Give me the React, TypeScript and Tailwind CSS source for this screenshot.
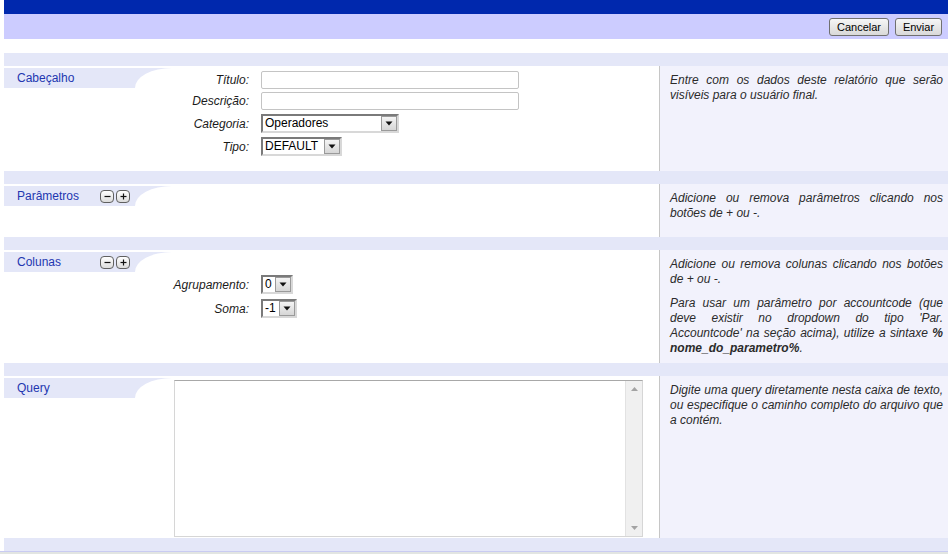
import type { ReactNode } from "react";

const band = "h-[13px] bg-[#e4e7f8]";

function Tab({ label, tools }: { label: string; tools?: boolean }) {
  return (
    <div className="mt-[2px] flex h-[20px]">
      <div className="flex flex-1 items-center bg-[#e4e7f8] pl-[13px] text-[12px] text-[#2236b0]">
        <span className="w-[83px]">{label}</span>
        {tools && (
          <div className="flex gap-[2px]">
            <MiniBtn kind="minus" />
            <MiniBtn kind="plus" />
          </div>
        )}
      </div>
      <svg width="37" height="20" viewBox="0 0 37 20" className="block">
        <path d="M0 0 H37 A37 20 0 0 0 0 20 Z" fill="#e4e7f8" />
      </svg>
    </div>
  );
}

function MiniBtn({ kind }: { kind: "minus" | "plus" }) {
  return (
    <div className="flex h-[13px] w-[14px] items-center justify-center rounded-[4px] border border-[#606060] bg-gradient-to-b from-white to-[#dcdcdc]">
      <svg width="7" height="7" viewBox="0 0 7 7">
        <path d="M0.5 3.5 H6.5" stroke="#111" strokeWidth="1.2" />
        {kind === "plus" && <path d="M3.5 0.5 V6.5" stroke="#111" strokeWidth="1.2" />}
      </svg>
    </div>
  );
}

function Select({ value, w }: { value: string; w: string }) {
  return (
    <div
      className={`flex h-[19px] items-stretch border-2 border-t-[#7a7a7a] border-l-[#7a7a7a] border-r-[#d8d8d8] border-b-[#d8d8d8] bg-white ${w}`}
    >
      <span className="flex-1 overflow-hidden whitespace-nowrap pl-[2px] text-[12px] leading-[15px] text-black">
        {value}
      </span>
      <span className="flex w-[16px] items-center justify-center border border-[#9a9a9a] bg-gradient-to-b from-[#f4f4f4] to-[#d6d6d6]">
        <svg width="8" height="5" viewBox="0 0 8 5">
          <path d="M0.5 0.5 H7.5 L4 4.5 Z" fill="#111" />
        </svg>
      </span>
    </div>
  );
}

function Input() {
  return (
    <div className="h-[18px] w-[258px] rounded-[2px] border border-[#c4c4c4] bg-white" />
  );
}

function Row({ label, children, className = "" }: { label: string; children: ReactNode; className?: string }) {
  return (
    <div className={`flex items-center ${className}`}>
      <span className="w-[77px] text-right text-[12px] italic text-[#1a1a1a]">{label}</span>
      <div className="ml-[12px]">{children}</div>
    </div>
  );
}

function Section({
  h,
  label,
  tools,
  middle,
  help,
}: {
  h: string;
  label: string;
  tools?: boolean;
  middle?: ReactNode;
  help: ReactNode;
}) {
  return (
    <>
      <div className={band} />
      <div className={`flex ${h}`}>
        <div className="w-[168px] shrink-0">
          <Tab label={label} tools={tools} />
        </div>
        <div className="w-[487px] shrink-0">{middle}</div>
        <div className="flex-1 border-l border-[#c6c6c6] bg-[#f2f2fc] pl-[10px] pr-[5px] pt-[7px] text-justify text-[12px] italic leading-[15px] text-[#2b2b2b]">
          {help}
        </div>
      </div>
    </>
  );
}

export default function App() {
  return (
    <div className="h-[554px] w-[948px] overflow-hidden bg-white font-['Liberation_Sans',Arial,sans-serif]">
      <div className="ml-[4px]">
        <div className="h-[14px] bg-[#0028ad]" />
        <div className="flex h-[25px] items-center justify-end gap-[6px] bg-[#ccccff] pr-[6px]">
          <button className="h-[18px] w-[60px] rounded-[3px] border border-[#707070] bg-gradient-to-b from-[#f6f6f6] to-[#d9d9d9] text-[11px] text-black">
            Cancelar
          </button>
          <button className="h-[18px] w-[47px] rounded-[3px] border border-[#707070] bg-gradient-to-b from-[#f6f6f6] to-[#d9d9d9] text-[11px] text-black">
            Enviar
          </button>
        </div>
        <div className="h-[14px]" />

        <Section
          h="h-[105px]"
          label="Cabeçalho"
          middle={
            <div className="pt-[5px]">
              <Row label="Título:">
                <Input />
              </Row>
              <Row label="Descrição:" className="mt-[3px]">
                <Input />
              </Row>
              <Row label="Categoria:" className="mt-[4px]">
                <Select value="Operadores" w="w-[138px]" />
              </Row>
              <Row label="Tipo:" className="mt-[4px]">
                <Select value="DEFAULT" w="w-[81px]" />
              </Row>
            </div>
          }
          help={<p>Entre com os dados deste relatório que serão visíveis para o usuário final.</p>}
        />

        <Section
          h="h-[53px]"
          label="Parâmetros"
          tools
          help={<p>Adicione ou remova parâmetros clicando nos botões de + ou -.</p>}
        />

        <Section
          h="h-[113px]"
          label="Colunas"
          tools
          middle={
            <div className="pt-[25px]">
              <Row label="Agrupamento:">
                <Select value="0" w="w-[32px]" />
              </Row>
              <Row label="Soma:" className="mt-[5px]">
                <Select value="-1" w="w-[36px]" />
              </Row>
            </div>
          }
          help={
            <>
              <p>Adicione ou remova colunas clicando nos botões de + ou -.</p>
              <p className="mt-[9px]">
                Para usar um parâmetro por accountcode (que deve existir no dropdown do tipo 'Par.
                Accountcode' na seção acima), utilize a sintaxe <b>%<wbr />nome_do_parametro%</b>.
              </p>
            </>
          }
        />

        <Section
          h="h-[162px]"
          label="Query"
          middle={
            <div className="ml-[2px] mt-[4px] flex h-[157px] w-[469px] border border-[#d6d6d6] border-t-[#a8a8a8] bg-white">
              <textarea className="flex-1 resize-none bg-white text-[12px] outline-none" />
              <div className="flex w-[17px] flex-col items-center justify-between border-l border-[#e2e2e2] bg-[#f0f0f0] py-[6px]">
                <svg width="7" height="4" viewBox="0 0 7 4">
                  <path d="M0 4 H7 L3.5 0 Z" fill="#a3a3a3" />
                </svg>
                <svg width="7" height="4" viewBox="0 0 7 4">
                  <path d="M0 0 H7 L3.5 4 Z" fill="#a3a3a3" />
                </svg>
              </div>
            </div>
          }
          help={
            <p>
              Digite uma query diretamente nesta caixa de texto, ou especifique o caminho completo do arquivo que
              a contém.
            </p>
          }
        />
        <div className={band} />
      </div>
      <div className="h-[1px] bg-[#c9cbf2]" />
      <div className="h-[2px] bg-[#e2e5e2]" />
    </div>
  );
}
